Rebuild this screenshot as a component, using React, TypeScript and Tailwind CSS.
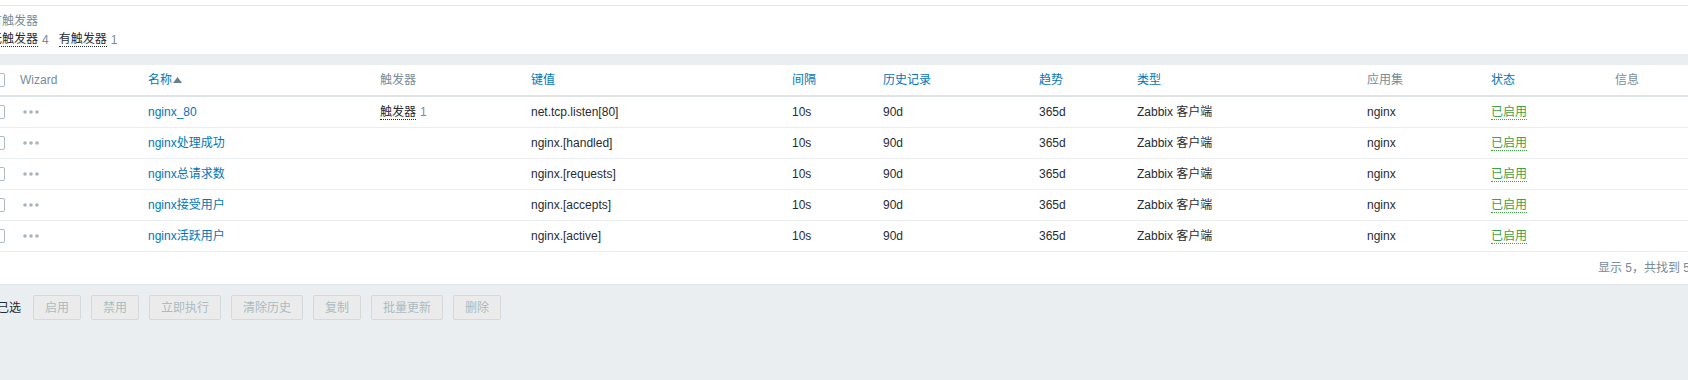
import React from 'react';

const grid =
  'grid grid-cols-[28px_128px_232px_151px_261px_91px_156px_98px_230px_124px_124px_90px]';

const items = [
  { name: 'nginx_80', triggers: 1, key: 'net.tcp.listen[80]' },
  { name: 'nginx处理成功', triggers: 0, key: 'nginx.[handled]' },
  { name: 'nginx总请求数', triggers: 0, key: 'nginx.[requests]' },
  { name: 'nginx接受用户', triggers: 0, key: 'nginx.[accepts]' },
  { name: 'nginx活跃用户', triggers: 0, key: 'nginx.[active]' },
];

const actions = ['启用', '禁用', '立即执行', '清除历史', '复制', '批量更新', '删除'];

function Checkbox() {
  return <span className="block w-[14px] h-[14px] border border-[#acbbc2] rounded-[2px] bg-white" />;
}

function Dots() {
  return (
    <svg width="20" height="6" viewBox="0 0 20 6" className="block">
      <circle cx="5" cy="3" r="1.8" fill="#a7b4bc" />
      <circle cx="11" cy="3" r="1.8" fill="#a7b4bc" />
      <circle cx="17" cy="3" r="1.8" fill="#a7b4bc" />
    </svg>
  );
}

function SortArrow() {
  return (
    <svg width="9" height="6" viewBox="0 0 9 6" className="inline-block ml-[1px] align-[1px]">
      <path d="M0 6 L4.5 0 L9 6 Z" fill="#6b7f8a" />
    </svg>
  );
}

export default function App() {
  return (
    <div className="w-[1688px] h-[380px] overflow-hidden bg-[#ebeef0] font-['Liberation_Sans','Noto_Sans_CJK_SC',sans-serif] text-[12px] leading-[14px] text-[#1f2c33]">
      <div className="-ml-[13px] w-[1713px]">
        {/* filter */}
        <div className="h-[5px] bg-white border-b border-[#e4e7ea] box-content" />
        <div className="h-[48px] bg-white pl-[3px] pt-[8px]">
          <div className="text-[#768d99]">有触发器</div>
          <div className="mt-[4px] flex items-center">
            <span className="border-b border-dotted border-[#1f2c33]">无触发器</span>
            <span className="ml-[4px] text-[#768d99]">4</span>
            <span className="ml-[10px] border-b border-dotted border-[#1f2c33]">有触发器</span>
            <span className="ml-[4px] text-[#768d99]">1</span>
          </div>
        </div>

        {/* table */}
        <div className="mt-[11px] bg-white">
          <div className={`${grid} h-[32px] items-center border-b-2 border-[#dfe4e7]`}>
            <div className="pl-[4px]"><Checkbox /></div>
            <div className="px-[5px] text-[#768d99]">Wizard</div>
            <div className="px-[5px] text-[#0275b8]">名称<SortArrow /></div>
            <div className="px-[5px] text-[#768d99]">触发器</div>
            <div className="px-[5px] text-[#0275b8]">键值</div>
            <div className="px-[5px] text-[#0275b8]">间隔</div>
            <div className="px-[5px] text-[#0275b8]">历史记录</div>
            <div className="px-[5px] text-[#0275b8]">趋势</div>
            <div className="px-[5px] text-[#0275b8]">类型</div>
            <div className="px-[5px] text-[#768d99]">应用集</div>
            <div className="px-[5px] text-[#0275b8]">状态</div>
            <div className="px-[5px] text-[#768d99]">信息</div>
          </div>

          {items.map((it) => (
            <div key={it.key} className={`${grid} h-[31px] items-center border-b border-[#ebeef0]`}>
              <div className="pl-[4px]"><Checkbox /></div>
              <div className="px-[5px]"><Dots /></div>
              <div className="px-[5px] text-[#0275b8]">{it.name}</div>
              <div className="px-[5px]">
                {it.triggers > 0 && (
                  <>
                    <span className="border-b border-dotted border-[#1f2c33]">触发器</span>
                    <span className="ml-[4px] text-[#768d99]">{it.triggers}</span>
                  </>
                )}
              </div>
              <div className="px-[5px]">{it.key}</div>
              <div className="px-[5px]">10s</div>
              <div className="px-[5px]">90d</div>
              <div className="px-[5px]">365d</div>
              <div className="px-[5px]">Zabbix 客户端</div>
              <div className="px-[5px]">nginx</div>
              <div className="px-[5px]">
                <span className="text-[#429e47] border-b border-dotted border-[#429e47]">已启用</span>
              </div>
              <div className="px-[5px]" />
            </div>
          ))}

          <div className="h-[33px] flex items-center justify-end pr-[10px] border-b border-[#dfe4e7] text-[#768d99]">
            显示 5，共找到 5
          </div>
        </div>

        {/* actions */}
        <div className="pt-[10px] flex items-center">
          <span className="text-[#1f2c33] whitespace-nowrap">0 已选</span>
          <div className="ml-[12px] flex gap-[10px]">
            {actions.map((a) => (
              <button
                key={a}
                disabled
                className="h-[25px] px-[11px] border border-[#d3d9dc] rounded-[2px] bg-[#ebebeb] text-[#acbbc2] text-[12px] leading-[14px]"
              >
                {a}
              </button>
            ))}
          </div>
        </div>
      </div>
    </div>
  );
}
